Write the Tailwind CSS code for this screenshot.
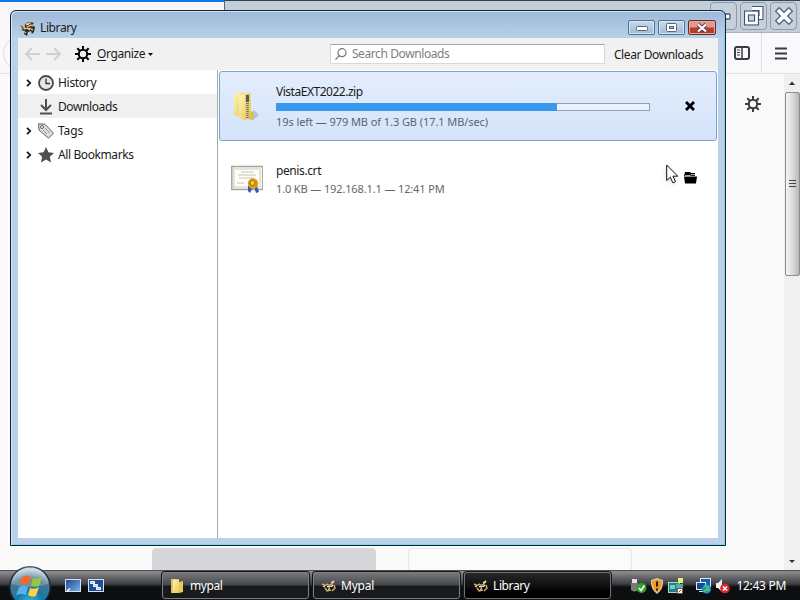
<!DOCTYPE html>
<html lang="en">
<head>
  <meta charset="UTF-8">
  <meta name="viewport" content="width=device-width, initial-scale=1.0">
  <title>Library</title>
  <script src="https://cdn.jsdelivr.net/npm/@tailwindcss/browser@4"></script>
</head>
<body class="bg-[#fafafa]">
  <svg class="absolute size-0">
    <defs>
      <linearGradient id="folder" x1="0" x2="1" y2="1"><stop stop-color="#fff6b4"/><stop offset="1" stop-color="#e6c65a"/></linearGradient>
      <radialGradient id="orb" cx=".5" cy=".95" r=".9"><stop stop-color="#35c5ef"/><stop offset=".4" stop-color="#1878a8"/><stop offset=".75" stop-color="#4a7690"/><stop offset="1" stop-color="#c4d4de"/></radialGradient>
      <linearGradient id="desk" x1="0" x2="1" y2="1"><stop stop-color="#17458f"/><stop offset="1" stop-color="#7fb2ee"/></linearGradient>
      <symbol id="mypal" viewBox="0 0 16 16">
        <path d="M0 5l4 2 2-4 4-1 4 1-2 2 3 2-1 5-2 2-1-3-3 1-1 4-3-2 1-3-4-1 2-1z" fill="#2e2a20"/>
        <path d="M1 5l4 2M6 4l5-1M7 7l4-2 2 1M4 9l3-1 3 2M5 12l1 1M11 9l2 1" stroke="#d9b77a" stroke-width="1.4" fill="none"/>
        <path d="M6 5l3-1M8 9l3-1M3 8h2" stroke="#f6ead0" fill="none"/>
      </symbol>
      <symbol id="mypal-light" viewBox="0 0 16 16">
        <path d="M1 6l3 1.500 3-1.500M7 7h3l3-4M13 7l1 3-3 3M4 10l2 3 4-1" stroke="#cda968" stroke-width="1.500" fill="none"/>
        <path d="M6 8.500l4 .5 2-2M7 11.500l2-1M10 5l3-2M2 8l2 1" stroke="#f6e9cb" stroke-width="1.300" fill="none"/>
        <path d="M9 10l2-.5" stroke="#18150f" stroke-width="1.500"/>
      </symbol>
      <symbol id="gear" viewBox="0 0 16 16">
        <circle cx="8" cy="8" r="4.2" fill="none" stroke="currentColor" stroke-width="2"/>
        <path d="M8 0v3.500M8 12.500V16M0 8h3.500M12.500 8H16M2.300 2.300l2.500 2.500M11.200 11.200l2.500 2.500M13.700 2.300l-2.500 2.500M4.800 11.200l-2.500 2.500" stroke="currentColor" stroke-width="2"/>
      </symbol>
      <symbol id="chevron" viewBox="0 0 8 8"><path d="M2 .8L5.200 4 2 7.200" fill="none" stroke="#111" stroke-width="1.700"/></symbol>
    </defs>
  </svg>

  <div class="relative flex h-[600px] w-[800px] flex-col overflow-hidden bg-[#fafafa] font-['Noto_Sans','Open_Sans',sans-serif] text-[12px] leading-4 tracking-[-0.400px] text-[#1a1a1a]">

    <!-- Browser window behind -->
    <div class="flex h-[33px] shrink-0">
      <div class="w-[224px] border-t-2 border-[#1473e6] bg-[#f8f8fa]"></div>
      <div class="flex flex-1 justify-end gap-[3px] border-t border-b border-l border-t-[#344255] border-b-[#a8b1c0] border-l-[#56657a] bg-[#c4ced9] pt-px pr-[3px]">
        <div class="flex h-[28px] w-[27px] items-center justify-center rounded-sm border border-[#8c9bb2] bg-[#c6d0dc]">
          <svg width="17" height="8"><rect x="2" y="2" width="13" height="5" rx="1" fill="#fff" stroke="#4b5774" stroke-width="1.300"/></svg>
        </div>
        <div class="flex h-[28px] w-[27px] items-center justify-center rounded-sm border border-[#8c9bb2] bg-[#c6d0dc]">
          <svg width="22" height="22" fill="none"><path d="M9 3.500h9v9h-4" stroke="#46516d" stroke-width="5"/><path d="M9 3.500h9v9h-4" stroke="#fff" stroke-width="2.800"/><rect x="3.500" y="8" width="10" height="10" fill="#cbd5e1" stroke="#46516d" stroke-width="5"/><rect x="3.500" y="8" width="10" height="10" stroke="#fff" stroke-width="2.800"/></svg>
        </div>
        <div class="flex h-[28px] w-[27px] items-center justify-center rounded-sm border border-[#8c9bb2] bg-[#c6d0dc]">
          <svg width="20" height="18" fill="none"><path d="M3 2l14 14M17 2L3 16" stroke="#46516d" stroke-width="6.200"/><path d="M3.800 2.800l12.400 12.400M16.200 2.800L3.800 15.200" stroke="#fff" stroke-width="4"/></svg>
        </div>
      </div>
    </div>
    <div class="flex h-[41px] shrink-0 justify-between border-b border-[#e2e2e4] bg-[#f9f9fb]">
      <div class="mt-[3px] ml-[3px] size-[34px] rounded-full border border-[#dddde0]"></div>
      <div class="flex items-center">
        <svg class="mr-[11px] text-[#3c3c40]" width="16" height="14" fill="none" stroke="currentColor"><rect x="1" y="1" width="14" height="12" rx="2" stroke-width="2"/><path d="M8 1v12" stroke-width="1.500"/><path d="M3 4h3M3 6.500h3M3 9h3"/></svg>
        <div class="h-full w-px bg-[#e0e0e3]"></div>
        <svg class="mr-[13px] ml-[13px]" width="12" height="13" stroke="#3c3c40" stroke-width="2"><path d="M0 1.500h12M0 6.500h12M0 11.500h12"/></svg>
      </div>
    </div>
    <div class="flex min-h-0 flex-1">
      <div class="flex flex-1 flex-col justify-between">
        <div class="flex justify-end pt-[22px] pr-[23px] text-[#3c3c40]"><svg width="16" height="16"><use href="#gear"/></svg></div>
        <div class="flex h-[22px] gap-8 pl-[152px]">
          <div class="w-[224px] rounded-t bg-[#d7d7da]"></div>
          <div class="w-[224px] rounded-t border border-b-0 border-[#e8e8ea] bg-[#fbfbfc]"></div>
        </div>
      </div>
      <div class="flex w-4 flex-col items-center bg-[#f0f0f0]">
        <svg class="mt-[7px] mb-[7px] shrink-0" width="6" height="4"><path d="M0 4l3-3.500L6 4z" fill="#333"/></svg>
        <div class="flex h-[184px] w-[15px] items-center justify-center rounded-xs border border-[#8d8d8d] bg-linear-to-r from-[#f5f5f5] via-[#dcdcdc] to-[#b8b8b8]">
          <svg width="7" height="8" stroke="#444"><path d="M0 .5h7M0 3.500h7M0 6.500h7"/></svg>
        </div>
        <svg class="mt-auto mb-[7px]" width="6" height="3"><path d="M0 0h6L3 3z" fill="#333"/></svg>
      </div>
    </div>

    <!-- Taskbar -->
    <div class="flex h-[30px] shrink-0 items-center border-t border-[#4d4f51] bg-linear-to-b from-[#85878a] from-5% via-[#3c3e41] via-45% to-[#0c0e10] to-55% text-[12px] text-white">
      <svg class="relative z-10 -mt-[2px] ml-[9px] shrink-0 overflow-visible" width="42" height="34">
        <circle cx="21" cy="19" r="21" fill="#132c3b"/><circle cx="21" cy="19" r="19.500" fill="url(#orb)"/>
        <path d="M3 16a18 18 0 0 1 36 0q-18 6-36 0z" fill="#fff" opacity=".22"/>
        <path d="M13 9q5-3 9 0l-2 8q-5-2-10 0z" fill="#ed6b2e"/><path d="M24 10q5 2 9-1l-3 9q-4 2-8-1z" fill="#95c83d"/>
        <path d="M10 19q5-3 9 0l-2 8q-4-2-10 0z" fill="#57b0ea"/><path d="M21 20q5 2 9-1l-3 9q-4 2-8-1z" fill="#ffd13d"/>
      </svg>
      <svg class="ml-[14px]" width="16" height="14"><rect x=".5" y=".5" width="15" height="12" fill="url(#desk)" stroke="#d3def1"/><path d="M2 12.500l3-3" stroke="#fff" stroke-width="1.500"/></svg>
      <svg class="ml-[7px]" width="16" height="14"><rect x=".5" y=".5" width="15" height="12" fill="#1f4e95" stroke="#d3def1"/><path d="M2.500 2.500h4v2h-4zM5.500 5.500h4v2h-4zM8.500 8.500h4v2h-4z" fill="#9cc2f0" stroke="#fff"/></svg>
      <div class="ml-[58px] flex gap-1">
        <div class="flex h-[27px] w-[147px] items-center rounded-[3px] border border-[#7b7d80] bg-linear-to-b from-[#77797c] via-[#45474a] via-48% to-[#181a1c] to-52% pl-[7px] shadow-[0_0_0_1px_#151719]">
          <svg class="mr-[6px]" width="14" height="16"><path d="M1 1h5l1 1v13H1z" fill="#dfc263"/><path d="M3 2l6-1v14H3z" fill="url(#folder)"/><path d="M9 4l4-1v11l-4 1z" fill="#e8c95c"/></svg>
          <span>mypal</span>
        </div>
        <div class="flex h-[27px] w-[147px] items-center rounded-[3px] border border-[#7b7d80] bg-linear-to-b from-[#77797c] via-[#45474a] via-48% to-[#181a1c] to-52% pl-[7px] shadow-[0_0_0_1px_#151719]">
          <svg class="mr-[4px]" width="16" height="16"><use href="#mypal-light"/></svg>
          <span class="tracking-[-0.200px]">Mypal</span>
        </div>
        <div class="flex h-[27px] w-[147px] items-center rounded-[3px] border border-[#6c6e70] bg-linear-to-b from-[#25272a] via-[#111] to-black pl-[8px] shadow-[0_0_0_1px_#151719]">
          <svg class="mr-[4px]" width="16" height="16"><use href="#mypal-light"/></svg>
          <span>Library</span>
        </div>
      </div>
      <div class="ml-auto flex items-center pr-[14px]">
        <svg width="16" height="16"><path d="M1 1h5v4H1z" fill="#e2e2e2"/><path d="M0 5h7v7q-3 3-7 0z" fill="#77797b"/><circle cx="10.500" cy="10" r="5" fill="#2fa52c"/><path d="M8 10l2 2.500 3.500-5" fill="none" stroke="#fff" stroke-width="1.500"/></svg>
        <svg class="ml-[3px]" width="14" height="16"><path d="M7 0l6 2q1 9-6 14Q0 11 1 2z" fill="#d6c5a5"/><path d="M7 1.500l4.700 1.500q.5 7-4.700 11.500Q1.800 10 2.300 3z" fill="#ee9a20"/><path d="M7 3.500v5M7 10.500v2" stroke="#2a1800" stroke-width="2"/></svg>
        <svg class="ml-[4px]" width="16" height="16"><rect x=".5" y="4.500" width="11" height="10" fill="#217f88" stroke="#a6d9d2"/><path d="M2 7h5v4H2z" fill="#70cecb"/><path d="M10 0h5v5h-5z" fill="#e9ec73"/><path d="M8 6h7v4H8z" fill="#58aca8"/><path d="M9.500 10.500h5v5h-5z" fill="#fff" stroke="#775c34"/><path d="M11 14l2-2" stroke="#c12"/></svg>
        <svg class="ml-[12px]" width="16" height="16"><rect x="4.500" y=".5" width="10" height="8" fill="#1761a8" stroke="#dcecff"/><rect x=".5" y="4.500" width="9" height="7" fill="#124b91" stroke="#dcecff"/><path d="M3 13.500h6" stroke="#dcecff"/><circle cx="10.500" cy="11" r="4.500" fill="#1796c9"/><path d="M8 8l4 1-1 3-3 1M12 11l2 2" stroke="#5fc464" stroke-width="1.700" fill="none"/></svg>
        <svg class="ml-[3px]" width="15" height="16"><path d="M1 5h2l4-4v13l-4-4H1z" fill="#eee"/><circle cx="10" cy="10.500" r="4.800" fill="#d9262b"/><path d="M8 8.500l4 4M12 8.500l-4 4" stroke="#fff" stroke-width="1.600"/></svg>
        <span class="ml-[6px] tracking-[-0.300px]">12:43 PM</span>
      </div>
    </div>

    <!-- Library window -->
    <div class="absolute top-[10px] left-[10px] flex h-[536px] w-[716px] flex-col rounded-t-[6px] border border-[#142433] bg-linear-to-b from-[#9eb9d8] to-[#b9d1ea] to-[28px] px-[7px] pb-[7px] shadow-[inset_1px_1px_0_#d3e3f2,inset_-1px_-1px_0_#7fd5ee]">
      <div class="flex h-[27px] shrink-0 items-center pt-[6px]">
        <svg class="ml-[2px]" width="16" height="16"><use href="#mypal"/></svg>
        <span class="ml-[4px]">Library</span>
        <div class="ml-auto flex gap-[3px] pr-[2px]">
          <div class="flex h-[15px] w-[27px] items-center justify-center rounded-xs border border-[#53708f] bg-linear-to-b from-[#cbdbed] to-[#9eb9d7] shadow-[inset_0_0_0_1px_#d7e5f4]"><svg width="12" height="6"><rect x=".5" y="1.500" width="11" height="4" rx="1" fill="#fff" stroke="#56657d"/></svg></div>
          <div class="flex h-[15px] w-[27px] items-center justify-center rounded-xs border border-[#53708f] bg-linear-to-b from-[#cbdbed] to-[#9eb9d7] shadow-[inset_0_0_0_1px_#d7e5f4]"><svg width="11" height="9"><rect x=".5" y=".5" width="10" height="8" rx="1" fill="#fff" stroke="#56657d"/><rect x="3.500" y="3.500" width="4" height="2" fill="#a5bbd5" stroke="#56657d"/></svg></div>
          <div class="flex h-[15px] w-[28px] items-center justify-center rounded-xs border border-[#672b2c] bg-linear-to-b from-[#dd9a8f] from-45% to-[#b83b2c] to-55% shadow-[inset_0_0_0_1px_#e6a99d]"><svg width="12" height="10" fill="none"><path d="M2 1.500l8 7M10 1.500l-8 7" stroke="#54393f" stroke-width="4"/><path d="M2 1.500l8 7M10 1.500l-8 7" stroke="#fff" stroke-width="2.300"/></svg></div>
        </div>
      </div>

      <!-- Toolbar -->
      <div class="flex h-[32px] shrink-0 items-center bg-[#f1f1f2]">
        <svg class="ml-[6px]" width="38" height="14" fill="none" stroke="#d0d0d1" stroke-width="2"><path d="M16 7H2M8 1L2 7l6 6M22 7h14M30 1l6 6-6 6"/></svg>
        <svg class="ml-[13px] text-black" width="16" height="16"><use href="#gear"/></svg>
        <span class="ml-[6px]"><u class="underline-offset-2">O</u>rganize</span>
        <svg class="ml-[3px]" width="5" height="3"><path d="M0 0h5L2.500 3z" fill="#111"/></svg>
        <div class="ml-auto flex h-[20px] w-[275px] items-center border border-[#d8d8da] border-t-[#a5a5a8] bg-white pl-[4px] text-[#7d7d80]">
          <svg width="12" height="12" fill="none" stroke="#77777a" stroke-width="1.200"><circle cx="7" cy="4.700" r="4"/><path d="M4.200 7.800L.5 11.500"/></svg>
          <span class="ml-[5px]">Search Downloads</span>
        </div>
        <span class="mr-[15px] ml-[9px] pt-[2px]">Clear Downloads</span>
      </div>

      <div class="flex min-h-0 flex-1 bg-white">
        <!-- Places -->
        <div class="w-[200px] shrink-0 border-r border-[#a9a9ad]">
          <div class="flex h-6 items-center pt-px pl-[7px]">
            <svg width="8" height="8"><use href="#chevron"/></svg>
            <svg class="mr-[4px] ml-[5px]" width="16" height="16" fill="none"><circle cx="8" cy="8" r="7" fill="#e6e6e7" stroke="#4a4a4d" stroke-width="1.800"/><path d="M8 3.500V8.500h4" stroke="#333" stroke-width="1.300"/></svg>
            <span class="pt-px tracking-[-0.300px]">History</span>
          </div>
          <div class="flex h-6 items-center bg-[#f0f0f0] pt-px pl-[20px]">
            <svg class="mr-[4px]" width="16" height="16" fill="none" stroke="#505053" stroke-width="2"><path d="M8 0v11M3 6l5 5 5-5M2 14.500h12"/></svg>
            <span class="pt-px">Downloads</span>
          </div>
          <div class="flex h-6 items-center pt-px pl-[7px]">
            <svg width="8" height="8"><use href="#chevron"/></svg>
            <svg class="mr-[4px] ml-[5px]" width="16" height="16" fill="none" stroke="#606063"><path d="M.5.8l6.500.4 8.500 9-5 5L1 7z" fill="#dededf"/><circle cx="4" cy="4" r="1.500" fill="#fff"/><path d="M7 5l5 5M5 7l4 4" stroke="#929295"/></svg>
            <span class="pt-px tracking-[-0.100px]">Tags</span>
          </div>
          <div class="flex h-6 items-center pt-px pl-[7px]">
            <svg width="8" height="8"><use href="#chevron"/></svg>
            <svg class="mr-[4px] ml-[5px]" width="16" height="16"><path d="M8 0l2.400 5.300 5.600.6-4.200 3.800 1.300 5.800L8 12.500l-5.100 3 1.300-5.800L0 5.900l5.600-.6z" fill="#505053"/></svg>
            <span class="pt-px">All Bookmarks</span>
          </div>
        </div>

        <!-- Downloads -->
        <div class="flex flex-1 flex-col pt-px pr-px pl-px">
          <div class="flex h-[70px] items-center rounded-[3px] border border-[#7da2ce] bg-linear-to-b from-[#e3edfc] to-[#d5e4fb] pl-[11px]">
            <svg width="32" height="32"><path d="M17 28l6-8 5 5-6 5z" fill="#909cad" opacity=".5"/><path d="M3 4l10-2v26l-10-3z" fill="url(#folder)"/><path d="M8 5l12-2v24l-7 3-5-2z" fill="url(#folder)"/><path d="M14 4l5-1v25l-5 2z" fill="#ebce62"/><path d="M16.500 5v23" stroke="#6a6d73" stroke-width="2.500" stroke-dasharray="1 1"/><path d="M15 5h3v7h-3z" fill="#555a60"/><path d="M20 21l3 2v6l-5 1z" fill="#e0bd50"/></svg>
            <div class="ml-[13px] w-[374px]">
              <div class="pt-px tracking-[-0.480px]">VistaEXT2022.zip</div>
              <div class="mt-[3px] h-[8px] border border-[#91a2b7] bg-[#eaf1fc]">
                <div class="-my-px -ml-px h-[8px] bg-[#3898ed]" style="width: 281px"></div>
              </div>
              <div class="mt-[3px] text-[11px] tracking-[-0.070px] text-[#5b6270]">19s left — 979 MB of 1.3 GB (17.1 MB/sec)</div>
            </div>
            <svg class="ml-[35px]" width="10" height="10" stroke="#000" stroke-width="2.800"><path d="M1 1l8 8M9 1L1 9"/></svg>
          </div>
          <div class="flex h-[76px] items-center pl-[12px]">
            <svg width="32" height="32"><rect x=".8" y="3.500" width="31" height="23" fill="#f6f5ee" stroke="#a6a69f" stroke-width="1.500"/><rect x="3" y="6" width="26" height="18" fill="#fffef8" stroke="#d2d0c4"/><path d="M10 9h13M7 12h18M8 15h15M6 20h7" stroke="#c2c2bc"/><path d="M17 23l5 1-3 6-2-2zM23 24l3-1 2 6-3 1z" fill="#3156bd"/><circle cx="22" cy="20.500" r="5.200" fill="#dc9c13"/><circle cx="21.500" cy="20" r="2.500" fill="#f8ce43" stroke="#9c6e0c"/></svg>
            <div class="ml-[13px] w-[374px]">
              <div class="pt-px">penis.crt</div>
              <div class="mt-[2px] text-[11px] tracking-[-0.130px] text-[#66666a]">1.0 KB — 192.168.1.1 — 12:41 PM</div>
            </div>
            <svg class="mb-[2px] ml-[34px]" width="13" height="12"><path d="M1 0h5l1 1h4v3H0z"/><path d="M0 4.500h13l-1 7H1z"/><path d="M1 3.700h5l1-1h5" fill="none" stroke="#fff" stroke-width=".8"/></svg>
          </div>
        </div>
      </div>
    </div>

    <!-- Pointer -->
    <svg class="absolute top-[164px] left-[666px] drop-shadow-sm" width="13" height="21"><path d="M.7 1v15.500l3.600-3.300 2.600 5.700 2.600-1.200-2.600-5.500h4.800z" fill="#fff" stroke="#111"/></svg>
  </div>
</body>
</html>
